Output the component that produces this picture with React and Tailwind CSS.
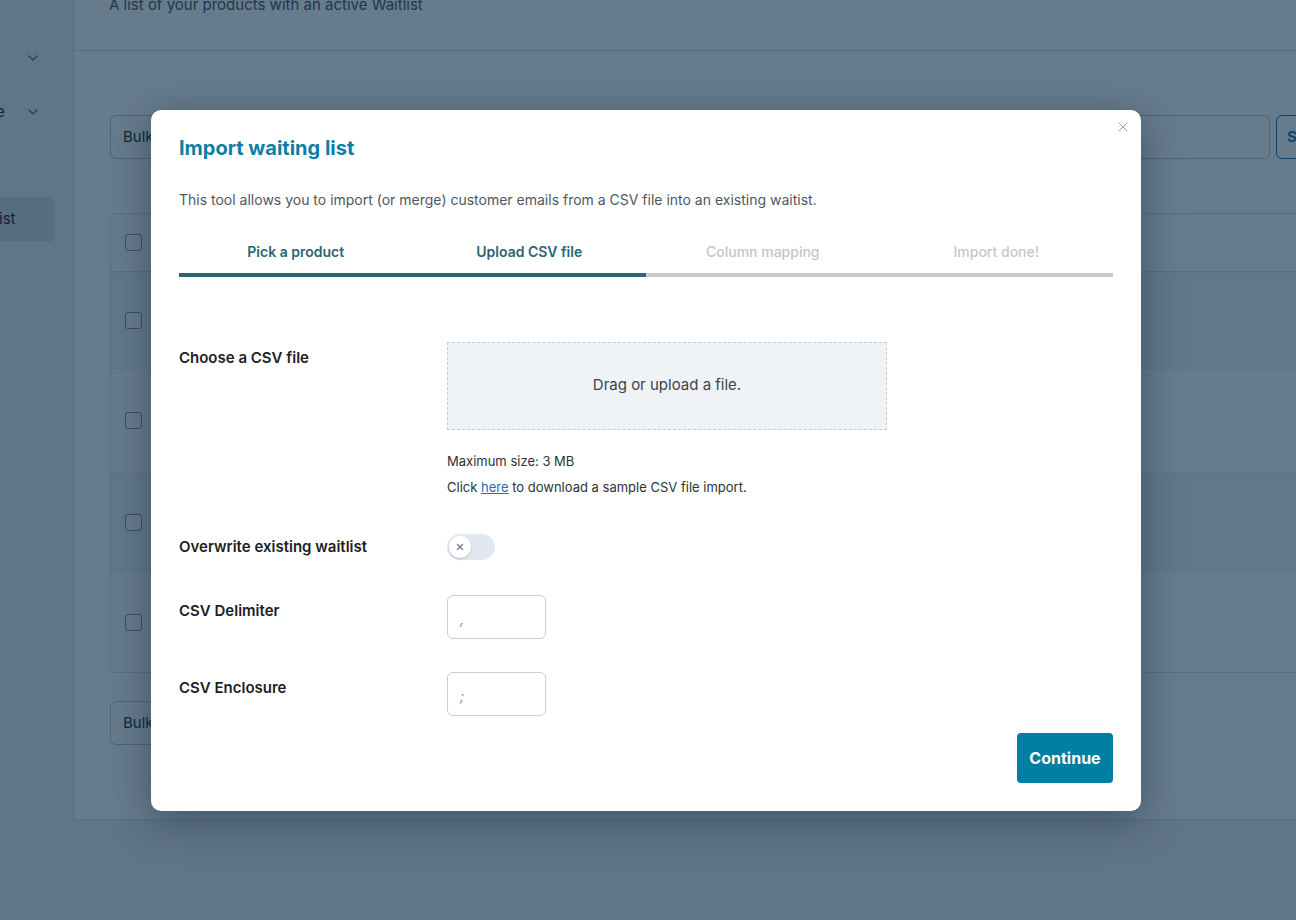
import { ChevronDown, X } from "lucide-react";

const font = { fontFamily: "Inter, 'Noto Sans', sans-serif" };

function Checkbox() {
  return <span className="block w-[17px] h-[17px] rounded-[3px] border border-[#8c8f94] bg-white" />;
}

function BackgroundPage() {
  const rows = [
    { h: "h-[58px]", bg: "bg-white" },
    { h: "h-[96px]", bg: "bg-[#f6f7f7]" },
    { h: "h-[104px]", bg: "bg-white" },
    { h: "h-[100px]", bg: "bg-[#f6f7f7]" },
    { h: "h-[100px]", bg: "bg-white" },
  ];
  return (
    <div className="flex h-[920px] bg-[#f0f0f1]">
      {/* sidebar, scrolled out to the left */}
      <aside className="w-[73px] shrink-0 pt-[44px] text-[#1d2327]">
        <div className="flex items-center justify-end pr-[32px] h-[28px]">
          <ChevronDown className="w-[16px] h-[16px] text-[#646970]" />
        </div>
        <div className="flex items-center justify-between pr-[32px] h-[28px] mt-[26px] text-[15px]">
          <span className="-ml-[4px]">e</span>
          <ChevronDown className="w-[16px] h-[16px] text-[#646970]" />
        </div>
        <div className="mt-[71px] w-[55px] h-[45px] rounded-r-[6px] bg-[#dcdcde] flex items-center text-[15px]">
          <span className="-ml-[1px]">ist</span>
        </div>
      </aside>

      {/* main card */}
      <main className="flex-1 h-[820px] bg-white border-l border-b border-[#dcdcde] pl-[36px]">
        <div className="h-[51px] -ml-[36px] pl-[35px] border-b border-[#dcdcde]">
          <p className="-translate-y-[5px] text-[15px] leading-[20px] text-[#50575e]">A list of your products with an active Waitlist</p>
        </div>

        <div className="mt-[64px] flex items-center gap-[6px]">
          <div className="w-[160px] h-[44px] rounded-[6px] border border-[#c3c4c7] flex items-center px-[12px] text-[15px] text-[#2c3338]">
            Bulk actions
          </div>
          <div className="flex-1" />
          <div className="w-[400px] h-[44px] rounded-[6px] border border-[#c3c4c7]" />
          <div className="w-[80px] -mr-[60px] h-[44px] rounded-[6px] border border-[#2271b1] flex items-center px-[10px] text-[15px] font-semibold text-[#2271b1]">
            Search
          </div>
        </div>

        <div className="mt-[54px] -mr-[10px] border border-[#dcdcde] rounded-l-[4px]">
          {rows.map((r, i) => (
            <div key={i} className={`${r.h} ${r.bg} flex items-center pl-[14px] ${i > 0 ? "border-t border-[#f0f0f1]" : "border-b border-[#dcdcde]"}`}>
              <Checkbox />
            </div>
          ))}
        </div>

        <div className="mt-[28px] w-[160px] h-[44px] rounded-[6px] border border-[#c3c4c7] flex items-center px-[12px] text-[15px] text-[#2c3338]">
          Bulk actions
        </div>
      </main>
    </div>
  );
}

function Tabs() {
  const tabs = [
    { label: "Pick a product", done: true },
    { label: "Upload CSV file", done: true },
    { label: "Column mapping", done: false },
    { label: "Import done!", done: false },
  ];
  return (
    <div className="mt-[32px] grid grid-cols-4">
      {tabs.map((t) => (
        <div key={t.label} className="flex flex-col">
          <span className={`text-center text-[14px] leading-[20px] pb-[11px] ${t.done ? "text-[#2b6577] font-semibold" : "text-[#c5c7c9] font-medium"}`}>
            {t.label}
          </span>
          <span className={`h-[4px] ${t.done ? "bg-[#2a6577]" : "bg-[#cacbcc]"}`} />
        </div>
      ))}
    </div>
  );
}

function Row({ label, children, center }) {
  return (
    <div className={`flex ${center ? "items-center" : "items-start"}`}>
      <div className={`w-[268px] shrink-0 text-[15px] leading-[22px] font-semibold text-[#1e1e1e] ${center ? "" : "pt-[5px]"}`}>{label}</div>
      <div className="flex-1">{children}</div>
    </div>
  );
}

function SmallInput({ value }) {
  return (
    <div className="w-[99px] h-[44px] rounded-[6px] border border-[#c6ced8] flex items-center pl-[12px] pt-[4px] text-[14px] text-[#8a9099] italic">
      {value}
    </div>
  );
}

function ImportModal() {
  return (
    <div className="relative mr-[4px] w-[990px] bg-white rounded-[10px] shadow-[0_10px_40px_rgba(15,35,55,0.45)] px-[28px] pt-[24px] pb-[28px]">
      <X className="absolute top-[9px] right-[10px] w-[16px] h-[16px] text-[#9a9ea3]" strokeWidth={1.5} />

      <h2 className="text-[20px] leading-[28px] font-bold text-[#0d7fa5]">Import waiting list</h2>
      <p className="mt-[28px] text-[14px] leading-[20px] text-[#50575e]">
        This tool allows you to import (or merge) customer emails from a CSV file into an existing waitist.
      </p>

      <Tabs />

      <div className="mt-[65px] flex flex-col">
        <Row label="Choose a CSV file">
          <div className="w-[440px] h-[88px] bg-[#f0f3f6] border border-dashed border-[#c5ced8] flex items-center justify-center text-[15px] text-[#3c434a]">
            Drag or upload a file.
          </div>
          <p className="mt-[21px] text-[13px] leading-[20px] text-[#2c3338]">Maximum size: 3 MB</p>
          <p className="mt-[6px] text-[13px] leading-[20px] text-[#2c3338]">
            Click <a href="#" className="text-[#2271b1] underline">here</a> to download a sample CSV file import.
          </p>
        </Row>

        <div className="mt-[37px]">
          <Row label="Overwrite existing waitlist" center>
            <div className="w-[48px] h-[26px] rounded-full bg-[#e2e8f0] p-[2px] flex items-center">
              <span className="w-[22px] h-[22px] rounded-full bg-white shadow-[0_1px_2px_rgba(0,0,0,0.2)] flex items-center justify-center">
                <X className="w-[10px] h-[10px] text-[#7a8594]" strokeWidth={3.5} />
              </span>
            </div>
          </Row>
        </div>

        <div className="mt-[35px]">
          <Row label="CSV Delimiter">
            <SmallInput value="," />
          </Row>
        </div>

        <div className="mt-[33px]">
          <Row label="CSV Enclosure">
            <SmallInput value=";" />
          </Row>
        </div>
      </div>

      <div className="mt-[17px] flex justify-end">
        <button className="w-[96px] h-[50px] rounded-[4px] bg-[#007ea3] text-white text-[16px] font-bold">Continue</button>
      </div>
    </div>
  );
}

export default function App() {
  return (
    <div className="relative w-full h-[920px] overflow-hidden" style={font}>
      <BackgroundPage />
      <div className="absolute inset-0 bg-[#00233f]/60 flex items-center justify-center">
        <ImportModal />
      </div>
    </div>
  );
}
